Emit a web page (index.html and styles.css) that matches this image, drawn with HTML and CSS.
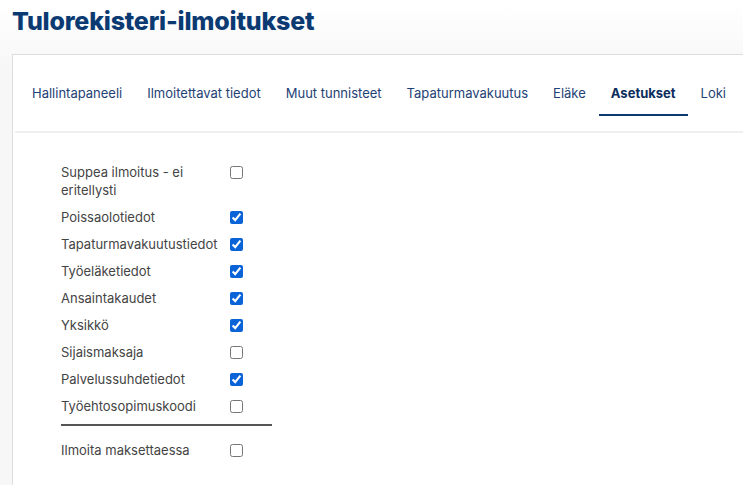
FILE: index.html
```html
<!DOCTYPE html>
<html lang="fi">
<head>
    <meta charset="UTF-8">
    <meta name="viewport" content="width=device-width, initial-scale=1.0">
    <title>Tulorekisteri-ilmoitukset</title>
    <link rel="stylesheet" href="styles.css">
</head>
<body>
    <h1 class="page-title">Tulorekisteri-ilmoitukset</h1>
    <div class="card">
        <nav class="tabs">
            <a class="tab" href="#">Hallintapaneeli</a>
            <a class="tab" href="#">Ilmoitettavat tiedot</a>
            <a class="tab" href="#">Muut tunnisteet</a>
            <a class="tab" href="#">Tapaturmavakuutus</a>
            <a class="tab" href="#">Eläke</a>
            <a class="tab active" href="#">Asetukset</a>
            <a class="tab" href="#">Loki</a>
        </nav>
        <div class="settings">
            <label class="setting"><span>Suppea ilmoitus - ei eritellysti</span><input type="checkbox"></label>
            <label class="setting"><span>Poissaolotiedot</span><input type="checkbox" checked></label>
            <label class="setting"><span>Tapaturmavakuutustiedot</span><input type="checkbox" checked></label>
            <label class="setting"><span>Työeläketiedot</span><input type="checkbox" checked></label>
            <label class="setting"><span>Ansaintakaudet</span><input type="checkbox" checked></label>
            <label class="setting"><span>Yksikkö</span><input type="checkbox" checked></label>
            <label class="setting"><span>Sijaismaksaja</span><input type="checkbox"></label>
            <label class="setting"><span>Palvelussuhdetiedot</span><input type="checkbox" checked></label>
            <label class="setting"><span>Työehtosopimuskoodi</span><input type="checkbox"></label>
            <hr class="divider">
            <label class="setting"><span>Ilmoita maksettaessa</span><input type="checkbox"></label>
        </div>
    </div>
</body>
</html>
```

FILE: styles.css
```css
:root {
    --navy: #0b3a73;
    --tab-color: #1e4275;
    --text-color: #444;
}
* {
    box-sizing: border-box;
    margin: 0;
    padding: 0;
    font-family: Inter, "Noto Sans", sans-serif;
}
html, body {
    height: 100%;
    overflow: hidden;
}
body {
    background: linear-gradient(#ffffff, #f7f7f7 70px);
    padding: 0 0 0 12px;
}
.page-title {
    color: var(--navy);
    font-size: 25px;
    font-weight: 800;
    letter-spacing: -0.2px;
    line-height: 32px;
    padding-top: 5px;
    height: 54px;
}
.card {
    background: #fff;
    border: 1px solid #ddd;
    border-right: none;
    border-bottom: none;
    height: calc(100vh - 54px);
}
.tabs {
    display: flex;
    gap: 1px;
    padding: 17px 0 15px 5px;
    margin: 0 0 0 2px;
    border-bottom: 2px solid #efefef;
}
.tab {
    color: var(--tab-color);
    text-decoration: none;
    font-size: 13px;
    line-height: 18px;
    padding: 12px 12px 12px;
    border-bottom: 2px solid transparent;
    white-space: nowrap;
}
.tab.active {
    color: #0b2d5c;
    font-weight: 700;
    border-bottom-color: var(--navy);
}
.settings {
    width: 259px;
    padding: 30px 0 0 48px;
}
.setting {
    display: flex;
    align-items: flex-start;
    justify-content: space-between;
    font-size: 13px;
    line-height: 18px;
    color: var(--text-color);
    margin-bottom: 9px;
}
.setting span {
    width: 169px;
}
.setting input {
    accent-color: #0b63d8;
    width: 13px;
    height: 13px;
    margin: 3px 29px 0 0;
}
.divider {
    border: none;
    border-top: 2px solid #555;
    margin: 1px 0 15px 0;
}
```
